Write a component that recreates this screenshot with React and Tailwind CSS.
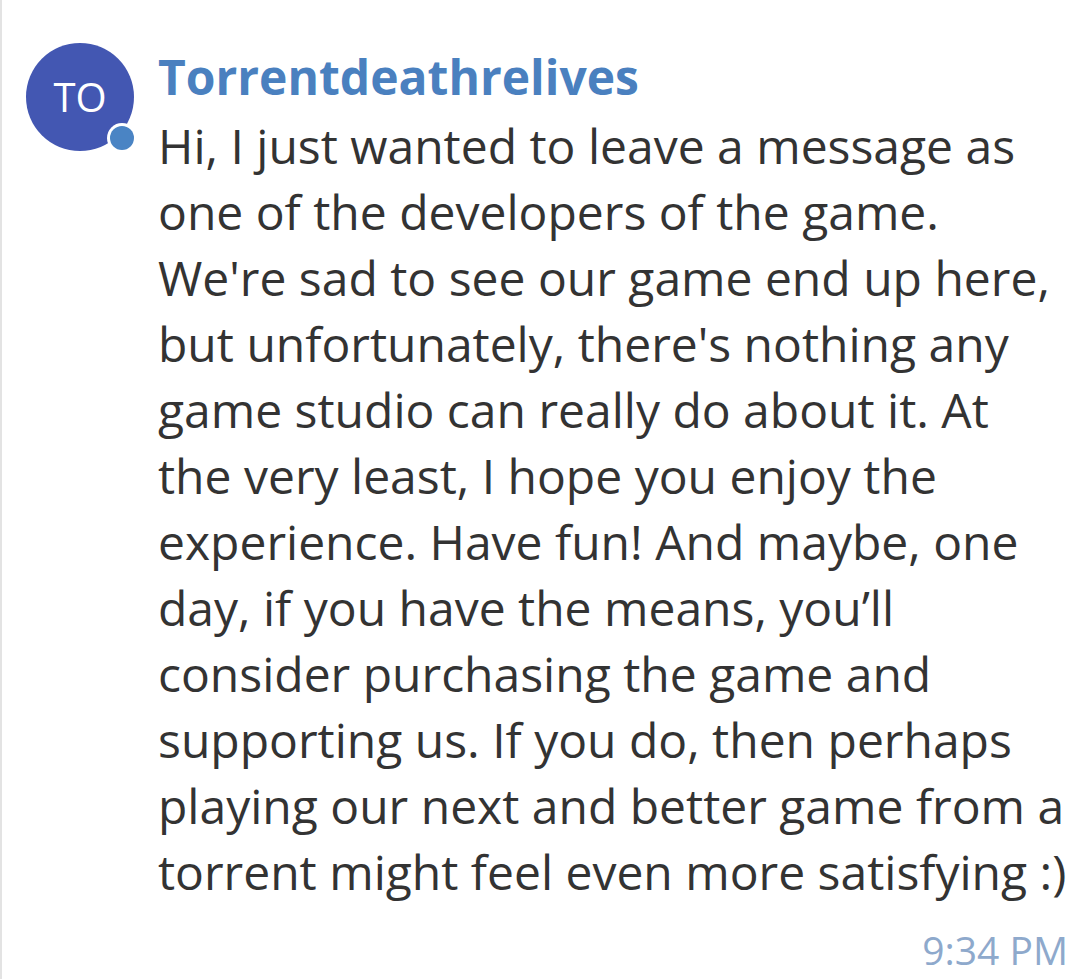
import React from 'react';

const lines = [
  'Hi, I just wanted to leave a message as',
  'one of the developers of the game.',
  "We're sad to see our game end up here,",
  "but unfortunately, there's nothing any",
  'game studio can really do about it. At',
  'the very least, I hope you enjoy the',
  'experience. Have fun! And maybe, one',
  'day, if you have the means, you\u2019ll',
  'consider purchasing the game and',
  'supporting us. If you do, then perhaps',
  'playing our next and better game from a',
  'torrent might feel even more satisfying :)',
];

const App = () => {
  return (
    <div className="w-[1076px] h-[979px] bg-white flex font-['Open_Sans',sans-serif]">
      <div className="w-[2px] bg-[#e3e3e3]" />
      <div className="flex-1 flex pl-[24px] pt-[43px]">
        <div className="relative w-[108px] h-[108px] shrink-0">
          <div className="w-full h-full rounded-full bg-[#4357b2] flex items-center justify-center text-white text-[40px] leading-none">
            TO
          </div>
          <div className="absolute left-[96px] top-[95px] -translate-x-1/2 -translate-y-1/2 w-[30px] h-[30px] rounded-full bg-white flex items-center justify-center">
            <div className="w-[24px] h-[24px] rounded-full bg-[#4a84c4]" />
          </div>
        </div>
        <div className="flex-1 pl-[24px] flex flex-col">
          <div className="text-[48px] font-bold text-[#4a80bf] leading-[60px] mt-[4px]">
            Torrentdeathrelives
          </div>
          <p className="text-[48px] text-[#333333] leading-[66px] mt-[6px]">
            {lines.map((l, i) => (
              <span key={i} className="block whitespace-nowrap">{l}</span>
            ))}
          </p>
          <div className="self-end pr-[8px] mt-[21px] text-[39px] text-[#8ea9cc] leading-[48px]">
            9:34 PM
          </div>
        </div>
      </div>
    </div>
  );
};

export default App;
